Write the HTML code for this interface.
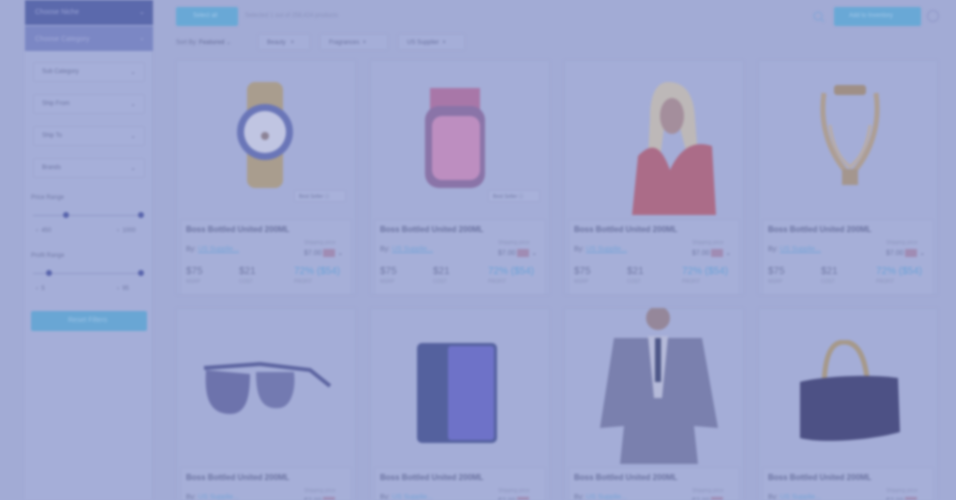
<!DOCTYPE html>
<html><head><meta charset="utf-8"><style>
*{margin:0;padding:0;box-sizing:border-box}
html,body{width:956px;height:500px;overflow:hidden;background:#a2abd5;font-family:"Liberation Sans",sans-serif}
#w{position:absolute;left:0;top:0;width:956px;height:500px;filter:blur(1.2px);overflow:hidden}
.a{position:absolute}
.t{position:absolute;font-size:7px;color:#727aa6;white-space:nowrap}
.sel{position:absolute;left:33px;width:112px;height:20px;background:#a6afd9;border:1px solid #9ea7d1;border-radius:2px}
.sel span{position:absolute;left:8px;top:6px;font-size:6px;color:#6d75a2}
.sel i{position:absolute;right:8px;top:5px;font-style:normal;font-size:7px;color:#7b83ae}
.card{position:absolute;width:180px;background:#a4add7;border:1px solid #9ea7d2}
.info{position:absolute;left:4px;width:172px;height:76px;border:1px solid #9ea7d2;background:#a6afd8}
.chip{position:absolute;top:34px;height:16px;border:1px solid #9ea7d1;border-radius:2px;font-size:6px;color:#6a72a0;padding:5px 8px;background:#a5aed8}
</style></head><body><div id="w">
<div class="a" style="left:25px;top:0;width:128px;height:500px;background:#a5aed8;border-right:1px solid #9da6d0"></div>
<div class="a" style="left:25px;top:0;width:128px;height:25px;background:#5b69ac"></div>
<div class="t" style="left:35px;top:9px;color:#9aa3d6">Choose Niche</div>
<div class="t" style="left:139px;top:8px;color:#9aa3d6">⌄</div>
<div class="a" style="left:25px;top:26px;width:128px;height:25px;background:#7b87c4"></div>
<div class="t" style="left:35px;top:36px;color:#a3abd9">Choose Category</div>
<div class="t" style="left:139px;top:34px;color:#a3abd9">⌄</div>
<div class="sel" style="top:62px"><span>Sub Category</span><i>⌄</i></div>
<div class="sel" style="top:94px"><span>Ship From</span><i>⌄</i></div>
<div class="sel" style="top:126px"><span>Ship To</span><i>⌄</i></div>
<div class="sel" style="top:158px"><span>Brands</span><i>⌄</i></div>
<div class="t" style="left:31px;top:195px;font-size:6px">Price Range</div>
<div class="a" style="left:33px;top:215px;width:110px;height:1px;background:#8f98c6"></div>
<div class="a" style="left:63px;top:212px;width:6px;height:6px;border-radius:50%;background:#5864ac"></div>
<div class="a" style="left:138px;top:212px;width:6px;height:6px;border-radius:50%;background:#5864ac"></div>
<div class="t" style="left:36px;top:228px;font-size:6px">‹ &nbsp;450</div>
<div class="t" style="left:117px;top:228px;font-size:6px">› &nbsp;1000</div>
<div class="t" style="left:31px;top:253px;font-size:6px">Profit Range</div>
<div class="a" style="left:33px;top:273px;width:110px;height:1px;background:#8f98c6"></div>
<div class="a" style="left:46px;top:270px;width:6px;height:6px;border-radius:50%;background:#5864ac"></div>
<div class="a" style="left:138px;top:270px;width:6px;height:6px;border-radius:50%;background:#5864ac"></div>
<div class="t" style="left:36px;top:286px;font-size:6px">‹ &nbsp;5</div>
<div class="t" style="left:117px;top:286px;font-size:6px">› &nbsp;95</div>
<div class="a" style="left:31px;top:311px;width:116px;height:20px;background:#69a6d4;border-radius:2px"></div>
<div class="t" style="left:68px;top:317px;color:#9ec3e6">Reset Filters</div>
<div class="a" style="left:176px;top:7px;width:62px;height:19px;background:#69a8d6;border-radius:2px"></div>
<div class="t" style="left:193px;top:13px;color:#a5c9ea;font-size:6px">Select all</div>
<div class="t" style="left:245px;top:13px;font-size:6px;color:#8a92bd">Selected 1 out of 258,424 products</div>
<svg class="a" style="left:812px;top:10px" width="14" height="14"><circle cx="6" cy="6" r="4" fill="none" stroke="#86a6d6" stroke-width="1.3"/><line x1="9" y1="9" x2="12" y2="12" stroke="#86a6d6" stroke-width="1.3"/></svg>
<div class="a" style="left:834px;top:7px;width:87px;height:19px;background:#69a8d6;border-radius:2px"></div>
<div class="t" style="left:849px;top:13px;color:#a5c9ea;font-size:6px">Add to Inventory</div>
<div class="a" style="left:927px;top:10px;width:12px;height:12px;border-radius:50%;border:1px solid #8e97c8"></div>
<div class="t" style="left:176px;top:39px;font-size:6px">Sort By: <b>Featured</b> ⌄</div>
<div class="chip" style="left:258px;width:52px">Beauty &nbsp;&nbsp;×</div>
<div class="chip" style="left:320px;width:68px">Fragrances &nbsp;×</div>
<div class="chip" style="left:398px;width:67px">US Supplier &nbsp;×</div>
<div class="card" style="left:176px;top:60px;height:235px"></div>
<div class="card" style="left:370px;top:60px;height:235px"></div>
<div class="card" style="left:564px;top:60px;height:235px"></div>
<div class="card" style="left:758px;top:60px;height:235px"></div>
<div class="card" style="left:176px;top:308px;height:200px"></div>
<div class="card" style="left:370px;top:308px;height:200px"></div>
<div class="card" style="left:564px;top:308px;height:200px"></div>
<div class="card" style="left:758px;top:308px;height:200px"></div>
<svg class="a" style="left:225px;top:80px" width="85" height="110"><rect x="22" y="2" width="36" height="106" rx="8" fill="#a99d8e"/><circle cx="40" cy="52" r="28" fill="#6a76b8"/><circle cx="40" cy="52" r="21" fill="#c0c5e2"/><circle cx="40" cy="56" r="4" fill="#8c8396"/></svg>
<div class="a" style="left:294px;top:190px;width:52px;height:12px;background:#a8b1da;border:1px solid #9ea7d1"></div><div class="t" style="left:299px;top:193px;font-size:5px">Best Seller ⓘ</div>
<svg class="a" style="left:420px;top:86px" width="70" height="104"><rect x="10" y="2" width="50" height="22" fill="#a877a8"/><rect x="5" y="20" width="60" height="82" rx="14" fill="#8a74a8"/><rect x="12" y="30" width="48" height="64" rx="10" fill="#bd8ec0"/></svg>
<div class="a" style="left:488px;top:190px;width:52px;height:12px;background:#a8b1da;border:1px solid #9ea7d1"></div><div class="t" style="left:493px;top:193px;font-size:5px">Best Seller ⓘ</div>
<svg class="a" style="left:620px;top:78px" width="110" height="137"><path d="M48 4 C35 4 30 20 30 40 L28 80 L40 80 L44 50 L60 50 L68 80 L78 80 L75 40 C74 18 66 4 48 4Z" fill="#bdb8b8"/><ellipse cx="52" cy="38" rx="12" ry="18" fill="#a48e9c"/><path d="M12 137 L18 78 C30 66 40 64 50 92 C60 70 74 62 92 68 L96 137Z" fill="#ab6c88"/></svg>
<svg class="a" style="left:818px;top:85px" width="64" height="105"><rect x="16" y="0" width="32" height="10" rx="3" fill="#9f8f86"/><path d="M6 8 C0 50 20 80 32 90 C44 80 64 50 58 8" fill="none" stroke="#ad9e94" stroke-width="5"/><path d="M12 40 C16 70 28 78 32 82 C36 78 48 70 52 40" fill="none" stroke="#b8aca8" stroke-width="3"/><rect x="24" y="84" width="16" height="16" fill="#a4968e"/></svg>
<svg class="a" style="left:200px;top:358px" width="140" height="62"><path d="M4 10 L60 6 L110 12 L130 28" fill="none" stroke="#5c64a0" stroke-width="4"/><path d="M6 12 C4 40 10 56 30 56 C46 56 50 40 50 16Z" fill="#6d73ac"/><path d="M56 14 C56 40 62 52 80 50 C92 48 96 30 94 14Z" fill="#737ab1"/></svg>
<svg class="a" style="left:416px;top:342px" width="84" height="104"><rect x="1" y="1" width="80" height="100" rx="5" fill="#54619e"/><rect x="32" y="4" width="46" height="94" rx="3" fill="#6e72c8"/></svg>
<svg class="a" style="left:594px;top:308px" width="130" height="156"><ellipse cx="64" cy="10" rx="12" ry="12" fill="#95879a"/><path d="M20 30 L108 30 L124 120 L100 118 L104 156 L26 156 L30 118 L6 120Z" fill="#7a80ae"/><path d="M54 28 L74 28 L68 90 L60 90Z" fill="#b5bad9"/><rect x="61" y="30" width="6" height="44" fill="#4e5788"/></svg>
<svg class="a" style="left:792px;top:340px" width="112" height="106"><path d="M32 50 C32 10 42 2 52 2 C62 2 74 10 76 50" fill="none" stroke="#a6998a" stroke-width="5"/><path d="M8 42 C30 36 80 34 106 38 L108 92 C80 100 30 104 8 98Z" fill="#4d5185"/></svg>
<div id="i"></div>
</div>
<script>
var xs=[176,370,564,758],h='';
xs.forEach(function(x){
 [ [219,1],[467,0] ].forEach(function(r){
  var y=r[0];
  h+='<div class="info" style="left:'+(x+4)+'px;top:'+y+'px"></div>';
  h+='<div class="t" style="left:'+(x+10)+'px;top:'+(y+6)+'px;font-weight:bold;font-size:8px;color:#6a72a0">Boss Bottled United 200ML</div>';
  h+='<div class="t" style="left:'+(x+10)+'px;top:'+(y+27)+'px;font-size:7px">By: <span style="color:#76a4d8;text-decoration:underline">US Supplie...</span></div>';
  h+='<div class="t" style="left:'+(x+128)+'px;top:'+(y+21)+'px;font-size:5px;color:#8c94bd">Shipping price</div>';
  h+='<div class="t" style="left:'+(x+128)+'px;top:'+(y+30)+'px;font-size:7px">$7.00 <span style="display:inline-block;width:12px;height:8px;background:#a08cb4;vertical-align:middle"></span> ⌄</div>';
  if(r[1]){
  h+='<div class="t" style="left:'+(x+10)+'px;top:'+(y+47)+'px;font-size:10px">$75</div><div class="t" style="left:'+(x+10)+'px;top:'+(y+60)+'px;font-size:5px;color:#8c94bd">MSRP</div>';
  h+='<div class="t" style="left:'+(x+63)+'px;top:'+(y+47)+'px;font-size:10px">$21</div><div class="t" style="left:'+(x+63)+'px;top:'+(y+60)+'px;font-size:5px;color:#8c94bd">COST</div>';
  h+='<div class="t" style="left:'+(x+118)+'px;top:'+(y+47)+'px;font-size:10px;color:#6aa2d8">72% ($54)</div><div class="t" style="left:'+(x+118)+'px;top:'+(y+60)+'px;font-size:5px;color:#8c94bd">PROFIT</div>';
  }
 });
});
document.getElementById('i').innerHTML=h;
</script>
</body></html>
